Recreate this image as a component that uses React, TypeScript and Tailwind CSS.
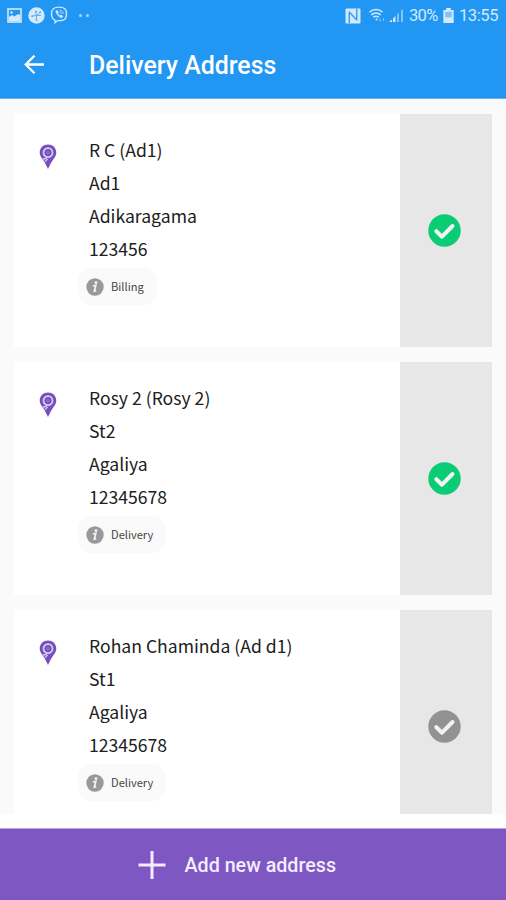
type Address = { lines: string[]; kind: string; selected: boolean };

const addresses: Address[] = [
  { lines: ["R C (Ad1)", "Ad1", "Adikaragama", "123456"], kind: "Billing", selected: true },
  { lines: ["Rosy 2 (Rosy 2)", "St2", "Agaliya", "12345678"], kind: "Delivery", selected: true },
  { lines: ["Rohan Chaminda (Ad d1)", "St1", "Agaliya", "12345678"], kind: "Delivery", selected: false },
];

function StatusBar() {
  return (
    <div className="flex h-[31px] items-center justify-between pr-[7px] pl-[7px] text-[#d3eafd]">
      <div className="flex items-center pb-px">
        <svg width="15" height="15" viewBox="0 0 15 15" fill="none">
          <rect x="1" y="1" width="13" height="13" stroke="currentColor" strokeWidth="1.6" />
          <path d="M2 9l3-2 2.500 1.500L11 6l2 1v6H2z" fill="currentColor" />
          <circle cx="4.500" cy="4.500" r="1.200" fill="currentColor" />
        </svg>
        <svg className="ml-[6px]" width="17" height="17" viewBox="0 0 17 17" fill="none">
          <circle cx="8.500" cy="8.500" r="8.200" fill="currentColor" />
          <path d="M8 8.500V5.500M8.500 8.500l3.500-3M8.500 8.500h4.500M8.500 8.500v5M8.500 8.500L4 9" stroke="#5eb0f5" strokeWidth="1" />
          <circle cx="8" cy="4.800" r="1.100" fill="#5eb0f5" />
          <circle cx="8.500" cy="13" r="1" fill="#5eb0f5" />
          <circle cx="12.200" cy="5.300" r="1" fill="#5eb0f5" />
          <circle cx="4.200" cy="9.200" r="1" fill="#5eb0f5" />
        </svg>
        <svg className="ml-[5px]" width="18" height="18" viewBox="0 0 18 18" fill="none" stroke="currentColor">
          <path d="M9 1.200C3.500 1.200 1.500 3 1.500 8c0 3.500 1 5.200 3.500 6v2.800L7.500 14.600c6.500.6 9-1.100 9-6.600 0-5-2-6.800-7.500-6.800z" strokeWidth="1.300" />
          <path d="M5.800 4.600c.2 3.700 2.500 6.200 5.900 7.300l1.300-1.700-2.100-1.400-.9.800c-1-.4-1.700-1.200-2.100-2.200l.8-.8-1.400-2.200z" fill="currentColor" strokeWidth=".4" />
          <path d="M9.500 4.100c2.500.2 3.700 1.500 3.800 3.900M9.700 6c1.200.1 1.700.7 1.800 1.800" strokeWidth=".8" />
        </svg>
        <div className="ml-[11px] flex gap-[4px]">
          <span className="size-[3px] rounded-full bg-[#a9d5fb]" />
          <span className="size-[3px] rounded-full bg-[#a9d5fb]" />
        </div>
      </div>
      <div className="flex items-center">
        <svg width="16" height="16" viewBox="0 0 16 16" fill="none">
          <rect x=".5" y=".5" width="15" height="15" rx="1" fill="currentColor" />
          <path d="M4.300 15V3.500M4.300 4L11.700 12M11.700 12.500V1" stroke="#3a9ff4" strokeWidth="1.500" />
        </svg>
        <svg className="ml-[8px]" width="18" height="15" viewBox="0 0 18 15" fill="none" stroke="currentColor" strokeWidth="1.500">
          <path d="M.5 4.200c3.600-3.600 9.400-3.600 13 0M2.300 6.900c2.600-2.500 6.800-2.500 9.400 0M4.300 9.300c1.600-1.300 3.800-1.300 5.400 0" />
          <circle cx="7.500" cy="11.500" r="1" fill="currentColor" stroke="none" />
          <path d="M11 10.500v3M14.500 10v3" strokeWidth="1.200" opacity=".5" />
        </svg>
        <svg className="ml-[2px]" width="16" height="15" viewBox="0 0 16 15" fill="currentColor">
          <path d="M0 14l3-2.500V14zM4 10.500L6.500 8v6H4z" />
          <path d="M8 6.500L10 4.500V14H8zM12 2.500L14 1v13h-2z" opacity=".55" />
        </svg>
        <span className="ml-[4px] w-[30px] pt-px font-[Roboto] text-[16.500px] leading-5 whitespace-nowrap tracking-[-0.700px]">30%</span>
        <svg className="ml-[4px]" width="11" height="15" viewBox="0 0 11 16">
          <path d="M3 0h5v2h3v14H0V2h3z" fill="currentColor" />
          <path d="M2 4h7v6H2z" fill="#7fc1f8" />
        </svg>
        <span className="ml-[5px] w-[40px] pt-px font-[Roboto] text-[16.500px] leading-5 whitespace-nowrap tracking-[-0.400px]">13:55</span>
      </div>
    </div>
  );
}

function Pin() {
  return (
    <svg width="18" height="26" viewBox="0 0 18 26" fill="none">
      <path d="M9 .5C4.200.500.700 4 .7 8.600c0 3 1.600 5 3.400 7.500C6 18.700 7.300 22 9 25c1.700-3 3-6.300 4.900-8.900 1.800-2.500 3.400-4.500 3.400-7.500C17.300 4 13.800.5 9 .5z" fill="#7751bb" />
      <circle cx="9" cy="8.600" r="4.500" stroke="#d9ccef" strokeWidth="1.700" />
      <circle cx="9" cy="8.600" r="1.800" fill="#8d6cc9" />
      <path d="M3.500 14.800c2 .5 3.800 0 4.800-1.600M6 17.500l2.500-2.500" stroke="#d4c6ec" strokeWidth="1.300" />
    </svg>
  );
}

function Check({ selected }: { selected: boolean }) {
  return (
    <svg width="33" height="33" viewBox="0 0 33 33" fill="none">
      <circle cx="16.500" cy="16.500" r="16.200" fill={selected ? "#09cc75" : "#929292"} />
      <path d="M8.300 17.200l5.700 5.500L24.500 12" stroke="#f0f3f0" strokeWidth="4" strokeLinecap="round" strokeLinejoin="round" />
    </svg>
  );
}

function AddressCard({ address }: { address: Address }) {
  return (
    <div className="flex h-[233px] shrink-0 bg-white">
      <div className="flex min-w-0 flex-1">
        <div className="w-[64px] shrink-0 pt-[30px] pl-[25px]">
          <Pin />
        </div>
        <div className="pt-[19px]">
          {address.lines.map((line, i) => (
            <p key={i} className="pl-[11px] font-['Noto_Sans_CJK_SC',sans-serif] text-[17.600px] leading-[33px] whitespace-nowrap text-[#202020]">
              {line}
            </p>
          ))}
          <div className="mt-[3px] flex h-[37px] w-fit items-center rounded-[14px] bg-[#fafafa] pr-[13px] pl-[8px]">
            <svg width="18" height="18" viewBox="0 0 18 18" fill="none">
              <circle cx="9" cy="9" r="8.700" fill="#999" />
              <circle cx="10" cy="4.700" r="1.400" fill="#f5f5f5" />
              <path d="M7 8l2.800-.6-1.400 5.700 1.800-.4" stroke="#f5f5f5" strokeWidth="1.700" />
            </svg>
            <span className="ml-[7px] pb-px font-['Noto_Sans_CJK_SC',sans-serif] text-[11.100px] leading-4 text-[#444]">{address.kind}</span>
          </div>
        </div>
      </div>
      <div className="flex w-[92.500px] shrink-0 items-center justify-center bg-[#e7e7e7] pr-[2px] pb-px">
        <Check selected={address.selected} />
      </div>
    </div>
  );
}

export default function App() {
  return (
    <div className="flex h-[900px] w-[506px] flex-col overflow-hidden bg-white">
      <header className="h-[99px] shrink-0 border-b border-[#64b5f6] bg-[#2196f3]">
        <StatusBar />
        <div className="flex h-[67px] items-center pl-[24px]">
          <svg width="21" height="20" viewBox="0 0 21 20" fill="none" stroke="#fff" strokeWidth="2.300">
            <path d="M20 9.500H2M10.500.7L1.700 9.500l8.800 8.800" />
          </svg>
          <h1 className="ml-[44px] pt-[2px] font-[Roboto] text-[24.900px] leading-8 font-medium whitespace-nowrap text-white">Delivery Address</h1>
        </div>
      </header>
      <main className="flex h-[715px] shrink-0 flex-col gap-[15px] overflow-hidden bg-[#fafafa] px-[14px] pt-[15px]">
        {addresses.map((address, i) => (
          <AddressCard key={i} address={address} />
        ))}
      </main>
      <button className="mt-[14px] flex h-[72px] shrink-0 items-center border-t border-[#b9a5de] bg-[#7e57c2] pl-[138px]">
        <svg width="28" height="28" viewBox="0 0 28 28" stroke="#f3edff" strokeWidth="3">
          <path d="M14 0v28M.5 14h27" />
        </svg>
        <span className="ml-[18.500px] pt-[2px] font-[Roboto] text-[19.700px] leading-6 font-medium whitespace-nowrap text-[#f3edff]">Add new address</span>
      </button>
    </div>
  );
}
